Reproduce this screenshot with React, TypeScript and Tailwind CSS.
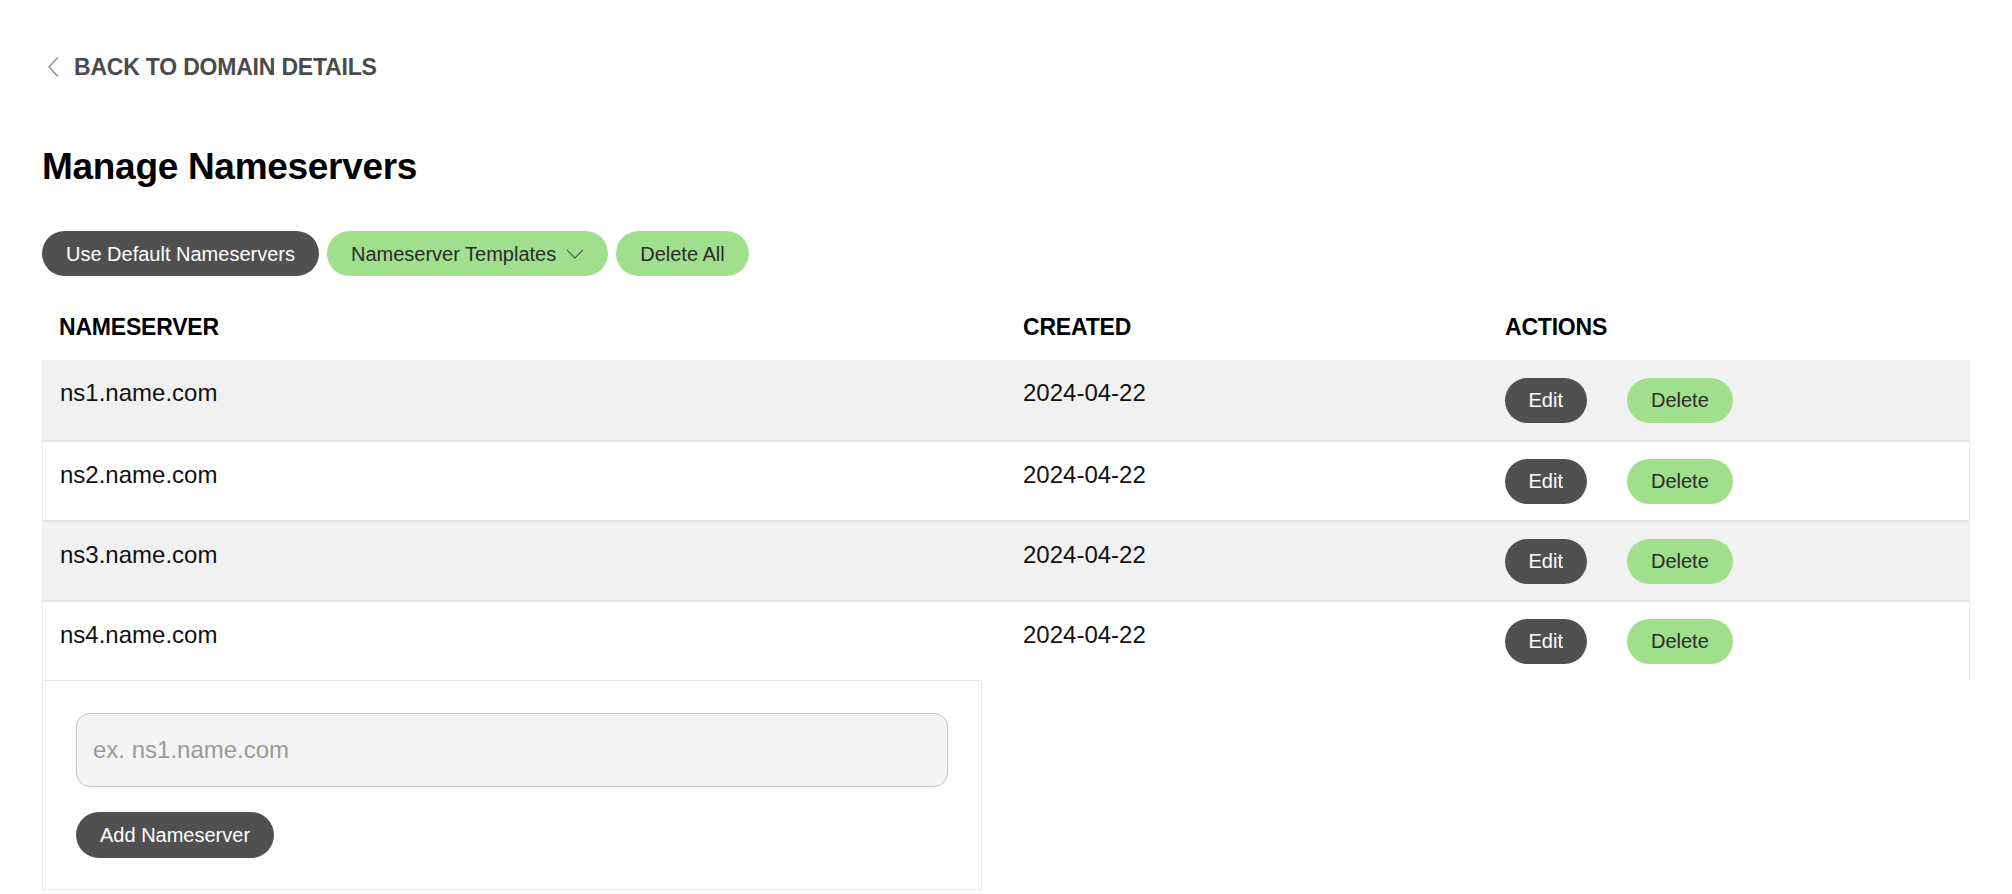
import { useState } from "react";

const nameservers = [
  { host: "ns1.name.com", created: "2024-04-22" },
  { host: "ns2.name.com", created: "2024-04-22" },
  { host: "ns3.name.com", created: "2024-04-22" },
  { host: "ns4.name.com", created: "2024-04-22" },
];

const darkBtn =
  "h-[45px] rounded-full bg-[#505050] px-6 text-[20px] leading-none text-white";
const greenBtn =
  "h-[45px] rounded-full bg-[#a0df8c] px-6 text-[20px] leading-none text-[#2b2b2b]";

export default function App() {
  const [value, setValue] = useState("");

  return (
    <div className="min-h-screen bg-white font-['Liberation_Sans',Arial,sans-serif] text-[#111]">
      <div className="px-[42px] pt-[53px]">
        {/* back link */}
        <a href="#" className="flex h-[28px] items-center gap-[14px] text-[#4b4b4b]">
          <svg width="13" height="22" viewBox="0 0 13 22" fill="none" className="ml-[5px]">
            <path d="M11 1.5 2 11l9 9.5" stroke="#8a8a8a" strokeWidth="1.3" />
          </svg>
          <span className="text-[23px] font-bold tracking-[-0.2px]">BACK TO DOMAIN DETAILS</span>
        </a>

        <h1 className="mt-16 text-[37px] font-bold leading-[44px] tracking-[-0.3px] text-black">
          Manage Nameservers
        </h1>

        <div className="mt-[42px] flex gap-2">
          <button className={darkBtn}>Use Default Nameservers</button>
          <button className={greenBtn + " flex items-center gap-[10px]"}>
            Nameserver Templates
            <svg width="18" height="10" viewBox="0 0 18 10" fill="none">
              <path d="M1 1l8 8 8-8" stroke="#555" strokeWidth="1.2" />
            </svg>
          </button>
          <button className={greenBtn}>Delete All</button>
        </div>

        {/* table */}
        <div className="mt-[18px]">
          <div className="grid h-[66px] grid-cols-[2fr_1fr_1fr] items-center text-[23px] font-bold tracking-[-0.2px] text-black">
            <div className="px-[17px]">NAMESERVER</div>
            <div className="px-[17px]">CREATED</div>
            <div className="px-[17px]">ACTIONS</div>
          </div>
          <div className="border-x border-[#ececec]">
            {nameservers.map((ns, i) => (
              <div
                key={ns.host}
                className={
                  "grid h-[80px] grid-cols-[2fr_1fr_1fr] text-[24px] " +
                  (i > 0 ? "border-t-2 border-[#e4e4e4] " : "") +
                  (i % 2 === 0 ? "bg-[#f1f1f1]" : "bg-white")
                }
              >
                <div className="px-[17px] pt-[19px] leading-[28px]">{ns.host}</div>
                <div className="px-[17px] pt-[19px] leading-[28px]">{ns.created}</div>
                <div className="flex items-center gap-10 px-[17px]">
                  <button className={darkBtn}>Edit</button>
                  <button className={greenBtn}>Delete</button>
                </div>
              </div>
            ))}
          </div>

          {/* add form */}
          <div className="w-[940px] border border-[#e8e8e8] px-[33px] pb-[31px] pt-[32px]">
            <input
              value={value}
              onChange={(e) => setValue(e.target.value)}
              placeholder="ex. ns1.name.com"
              className="h-[74px] w-full rounded-[14px] border border-[#c4c4c4] bg-[#f4f4f4] px-4 text-[24px] outline-none placeholder:text-[#9a9a9a]"
            />
            <button className={darkBtn + " mt-[25px] h-[46px]"}>Add Nameserver</button>
          </div>
        </div>
      </div>
    </div>
  );
}
